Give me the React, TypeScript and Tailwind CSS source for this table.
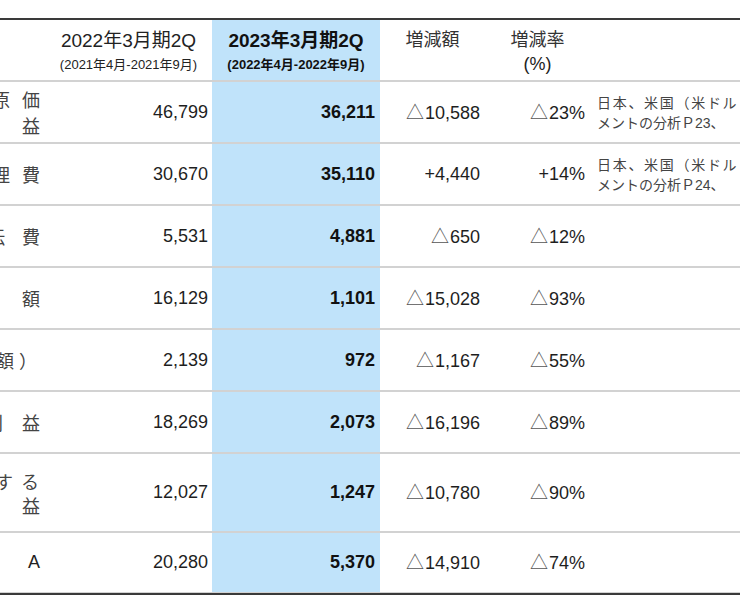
import React from "react";

const FONT = "font-['Liberation_Sans','Noto_Sans_CJK_JP',sans-serif]";
const CJK = "font-['Noto_Sans_CJK_JP',sans-serif]";

type Line = { chars: string[]; cls: string };
type Row = {
  h: string;
  lead: string;
  label: Line[];
  a: string;
  b: string;
  c: string;
  d: string;
  note?: string[];
  last?: boolean;
};

const rows: Row[] = [
  {
    h: "h-[62px] border-b-2",
    lead: "leading-[26px]",
    label: [
      { chars: ["売", "上", "原", "価"], cls: "gap-[12px] mr-0" },
      { chars: ["総", "利", "益"], cls: "gap-[30px] mr-0" },
    ],
    a: "46,799",
    b: "36,211",
    c: "△10,588",
    d: "△23%",
    note: ["日本、米国（米ドル", "メントの分析Ｐ23、"],
  },
  {
    h: "h-[62px] border-b-2",
    lead: "leading-[26px]",
    label: [{ chars: ["販", "売", "費", "及", "び", "一", "般", "管", "理", "費"], cls: "gap-[12px] mr-0" }],
    a: "30,670",
    b: "35,110",
    c: "+4,440",
    d: "+14%",
    note: ["日本、米国（米ドル", "メントの分析Ｐ24、"],
  },
  {
    h: "h-[62px] border-b-2",
    lead: "leading-[26px]",
    label: [{ chars: ["広", "告", "宣", "伝", "費"], cls: "gap-[17px] mr-0" }],
    a: "5,531",
    b: "4,881",
    c: "△650",
    d: "△12%",
  },
  {
    h: "h-[62px] border-b-2",
    lead: "leading-[26px]",
    label: [{ chars: ["営", "業", "利", "益", "額"], cls: "gap-[30px] mr-0" }],
    a: "16,129",
    b: "1,101",
    c: "△15,028",
    d: "△93%",
  },
  {
    h: "h-[62px] border-b-2",
    lead: "leading-[26px]",
    label: [{ chars: ["（", "持", "分", "額", "）"], cls: "gap-[5px] mr-[3px]" }],
    a: "2,139",
    b: "972",
    c: "△1,167",
    d: "△55%",
  },
  {
    h: "h-[62px] border-b-2",
    lead: "leading-[26px]",
    label: [{ chars: ["経", "常", "利", "益"], cls: "gap-[19px] mr-0" }],
    a: "18,269",
    b: "2,073",
    c: "△16,196",
    d: "△89%",
  },
  {
    h: "h-[79px] border-b-2",
    lead: "leading-[24px]",
    label: [
      { chars: ["に", "帰", "属", "す", "る"], cls: "gap-[8px] mr-[1px]" },
      { chars: ["純", "利", "益"], cls: "gap-[30px] mr-0" },
    ],
    a: "12,027",
    b: "1,247",
    c: "△10,780",
    d: "△90%",
  },
  {
    h: "h-[60px] border-b",
    lead: "leading-[26px]",
    label: [],
    a: "20,280",
    b: "5,370",
    c: "△14,910",
    d: "△74%",
    last: true,
  },
];

function Num({ v, bold }: { v: string; bold?: boolean }) {
  if (v.startsWith("△")) {
    return (
      <span className="whitespace-nowrap">
        <span className={`${CJK} font-normal text-[#555] mr-[1px]`}>△</span>
        {v.slice(1)}
      </span>
    );
  }
  return <span className={`whitespace-nowrap ${bold ? "font-bold" : ""}`}>{v}</span>;
}

function LabelCell({ row }: { row: Row }) {
  if (row.last) {
    return (
      <div className="overflow-hidden flex items-center justify-end pr-[5px]">
        <div className={`flex gap-[30px] ${FONT} text-[18px] text-[#222]`}>
          {["E", "B", "I", "T", "D", "A"].map((c, i) => (
            <span key={i}>{c}</span>
          ))}
        </div>
      </div>
    );
  }
  return (
    <div className="overflow-hidden flex flex-col justify-center items-end pr-[5px]">
      {row.label.map((ln, i) => (
        <div key={i} className={`flex shrink-0 justify-end whitespace-nowrap ${ln.cls} ${CJK} text-[18px] ${row.lead} text-[#444]`}>
          {ln.chars.map((c, j) => (
            <span key={j} className="w-[18px] text-center shrink-0">
              {c}
            </span>
          ))}
        </div>
      ))}
    </div>
  );
}

export default function App() {
  return (
    <div className={`w-[740px] h-[600px] bg-white overflow-hidden ${FONT}`}>
      <div className="mt-[18px] border-t-2 border-b-2 border-t-[#3a3a3a] border-b-[#3a3a3a]">
        {/* header */}
        <div className="grid grid-cols-[45px_167px_168px_105px_105px_150px] h-[62px] border-b-2 border-[#d2d2d2]">
          <div />
          <div className="flex flex-col items-center pt-[9px] text-[#222]">
            <div className="text-[19px] leading-[24px] whitespace-nowrap">2022年3月期2Q</div>
            <div className="text-[13px] leading-[16px] mt-[4px] whitespace-nowrap">(2021年4月-2021年9月)</div>
          </div>
          <div className="flex flex-col items-center pt-[9px] bg-[#c0e3fa] text-[#111]">
            <div className="text-[19px] leading-[24px] font-bold whitespace-nowrap">2023年3月期2Q</div>
            <div className="text-[13px] leading-[16px] mt-[4px] font-bold whitespace-nowrap">(2022年4月-2022年9月)</div>
          </div>
          <div className="flex flex-col items-center pt-[8px] text-[#333]">
            <div className="text-[18px] leading-[24px]">増減額</div>
          </div>
          <div className="flex flex-col items-center pt-[8px] text-[#333]">
            <div className="text-[18px] leading-[24px]">増減率</div>
            <div className="text-[18px] leading-[24px] text-[#222]">(%)</div>
          </div>
          <div />
        </div>

        {rows.map((r, i) => (
          <div key={i} className={`grid grid-cols-[45px_167px_168px_105px_105px_150px] ${r.h} border-[#d2d2d2]`}>
            <LabelCell row={r} />
            <div className="flex items-center justify-end pr-[4px] text-[18px] text-[#1e1e1e]">
              <Num v={r.a} />
            </div>
            <div className="flex items-center justify-end pr-[5px] bg-[#c0e3fa] text-[18px] text-[#111]">
              <Num v={r.b} bold />
            </div>
            <div className="flex items-center justify-end pr-[5px] text-[18px] text-[#1e1e1e]">
              <Num v={r.c} />
            </div>
            <div className="flex items-center justify-end pr-[5px] text-[18px] text-[#1e1e1e]">
              <Num v={r.d} />
            </div>
            <div className="overflow-hidden flex flex-col justify-center pl-[7px] text-[14px] leading-[20px] text-[#444]">
              {r.note && (
                <>
                  <div className={`whitespace-nowrap tracking-[1.7px] ${CJK}`}>{r.note[0]}</div>
                  <div className={`whitespace-nowrap ${CJK}`}>
                    {r.note[1].slice(0, 7)}
                    <span className={FONT}>{r.note[1].slice(7, 9)}</span>
                    {r.note[1].slice(9)}
                  </div>
                </>
              )}
            </div>
          </div>
        ))}
      </div>
    </div>
  );
}
